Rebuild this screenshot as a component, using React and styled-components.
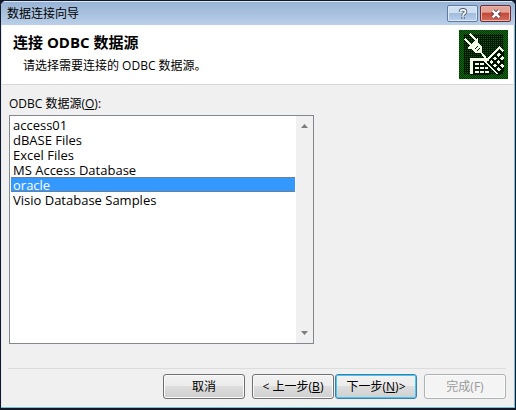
import React, { useState } from 'react';
import styled, { createGlobalStyle, css } from 'styled-components';

const SOURCES = [
  'access01',
  'dBASE Files',
  'Excel Files',
  'MS Access Database',
  'oracle',
  'Visio Database Samples',
];

function App() {
  const [source, setSource] = useState('oracle');

  return (
    <Dialog>
      <GlobalStyle />
      <TitleBar>
        <Caption>数据连接向导</Caption>
        <HelpButton aria-label="帮助">
          <HelpGlyph />
        </HelpButton>
        <CloseButton aria-label="关闭">
          <CloseGlyph />
        </CloseButton>
      </TitleBar>
      <Banner>
        <div>
          <Heading>连接 ODBC 数据源</Heading>
          <Hint>请选择需要连接的 ODBC 数据源。</Hint>
        </div>
        <PlugIcon />
      </Banner>
      <Content>
        <Label htmlFor="source">
          ODBC 数据源(<u>O</u>):
        </Label>
        <ListFrame>
          <List
            id="source"
            size={15}
            value={source}
            onChange={event => setSource(event.target.value)}
          >
            {SOURCES.map(name => (
              <Item key={name} value={name}>{name}</Item>
            ))}
          </List>
          <ScrollTrack>
            <Arrow />
            <Arrow $down />
          </ScrollTrack>
        </ListFrame>
      </Content>
      <Footer>
        <Button>取消</Button>
        <StepButtons>
          <Button>&lt; 上一步(<u>B</u>)</Button>
          <Button $primary>下一步(<u>N</u>)&gt;</Button>
        </StepButtons>
        <Button disabled>完成(F)</Button>
      </Footer>
    </Dialog>
  );
}

const HelpGlyph = () => (
  <svg width="12" height="12" viewBox="0 0 14 14" fill="none">
    <path d="M4 4.5C4 1.2 10 1.2 10 4.5C10 6.5 7 6.5 7 9M7 10.5V12.5" stroke="#46556f" strokeWidth="4" />
    <path d="M4 4.5C4 1.5 10 1.5 10 4.5C10 6.5 7 6.5 7 9M7 10.8V12.2" stroke="#fff" strokeWidth="2" />
  </svg>
);

const CloseGlyph = () => (
  <svg width="12" height="10" viewBox="0 0 14 12" fill="none">
    <path d="M3 2L11 10M11 2L3 10" stroke="#5d3540" strokeWidth="5" />
    <path d="M3 2L11 10M11 2L3 10" stroke="#fff" strokeWidth="3" />
  </svg>
);

const Arrow = ({ $down }) => (
  <svg width="7" height="4" viewBox="0 0 7 4">
    <path d={$down ? 'M0 0H7L3.5 4Z' : 'M0 4H7L3.5 0Z'} fill="#7c7c7c" />
  </svg>
);

const PlugIcon = () => (
  <svg width="49" height="49" viewBox="0 0 49 49" shapeRendering="crispEdges">
    <defs>
      <pattern id="rim" width="2" height="2" patternUnits="userSpaceOnUse">
        <rect width="2" height="2" fill="#002c00" />
        <path d="M0 0H1V1H0ZM1 1H2V2H1Z" fill="#087008" />
      </pattern>
      <pattern id="dots" width="2" height="2" patternUnits="userSpaceOnUse">
        <rect width="2" height="2" fill="#001800" />
        <path d="M0 0H1V1H0Z" fill="#0c5a10" />
      </pattern>
      <clipPath id="plate">
        <path d="M0 0H45V45H0Z" />
      </clipPath>
    </defs>
    <rect width="49" height="49" fill="url(#rim)" />
    <rect x="5" y="4" width="39" height="40" fill="url(#dots)" />
    <path d="M11 28H31V45H11Z" fill="#001400" />
    <path d="M11 28H27V31H14V44H11Z" fill="#f4fbe8" />
    <path d="M16 33h4v2h-4zM21 33h4v2h-4zM16 37h4v2h-4zM21 37h4v2h-4zM26 37h3v2h-3zM16 41h4v2h-4zM21 41h4v2h-4zM26 41h4v2h-4z" fill="#f4fbe8" />
    <g clipPath="url(#plate)">
      <g transform="translate(25 32) rotate(-45)">
        <path d="M0 0H23V20H0Z" fill="#001400" />
        <path d="M0 0H22V6H20V2H2V18H0Z" fill="#f4fbe8" />
        <path
          d="M4 4h3v3h-3zM9 4h3v3h-3zM14 4h3v3h-3zM4 9h3v3h-3zM9 9h3v3h-3zM14 9h3v3h-3zM4 14h3v3h-3zM9 14h3v3h-3zM14 14h3v3h-3zM19 9h3v3h-3z"
          fill="#f4fbe8"
        />
      </g>
    </g>
    <path d="M6 9L12 15M11 4L17 10M21 21L29 31" stroke="#f4fbe8" strokeWidth="2" fill="none" />
    <path d="M8 18L18 8L19 9L19 12L23 17V23H17L12 19L9 19Z" fill="#f4fbe8" />
    <path d="M16 19L19 16M18 21L21 18" stroke="#001400" fill="none" />
  </svg>
);

const GlobalStyle = createGlobalStyle`
  * {
    box-sizing: border-box;
  }

  body {
    margin: 0;
    background: #10182a;
    color: #000;
    font: 12px/16px "Open Sans", "Noto Sans CJK SC", sans-serif;
  }

  button,
  select {
    font: inherit;
    color: inherit;
  }

  svg {
    display: block;
    flex: none;
  }
`;

const Dialog = styled.main`
  display: flex;
  flex-direction: column;
  min-height: 100vh;
  border: 1px solid #10182a;
  border-bottom-width: 2px;
  border-radius: 6px 6px 0 0;
  background: #f0f0f0;
  box-shadow: inset -1px -1px #6fc3d6, inset 1px 0 #e4e8f4;
  overflow: hidden;
`;

const TitleBar = styled.header`
  display: flex;
  align-items: center;
  gap: 2px;
  height: 24px;
  padding: 0 4px 0 6px;
  border-top: 1px solid #dbe8f5;
  background: linear-gradient(#98b4d4, #b9cfe9);
`;

const Caption = styled.span`
  flex: 1;
`;

const captionButton = css`
  display: flex;
  align-items: center;
  justify-content: center;
  width: 31px;
  height: 17px;
  padding: 0;
  border-radius: 2px;
`;

const HelpButton = styled.button`
  ${captionButton}
  border: 1px solid #5f7ba3;
  background: linear-gradient(#cfdff2 45%, #a3bddd 50%, #b9d0eb);
  box-shadow: inset 0 0 0 1px #dbe9f8;
`;

const CloseButton = styled.button`
  ${captionButton}
  border: 1px solid #6d2a30;
  background: linear-gradient(#e3a296 40%, #c4493b 50%, #d0705c);
  box-shadow: inset 0 0 0 1px #e9b5aa;
`;

const Banner = styled.section`
  display: flex;
  justify-content: space-between;
  margin: 0 2px 0 1px;
  padding: 5px 5px 5px 11px;
  border-bottom: 1px solid #d5d5d5;
  background: #fff;
`;

const Heading = styled.h1`
  margin: 2px 0 6px;
  font-size: 15px;
  line-height: 20px;
`;

const Hint = styled.p`
  margin: 2px 0 0;
  padding-left: 10px;
`;

const Content = styled.section`
  display: grid;
  grid-template-columns: 8fr 5fr;
  align-content: start;
  flex: 1;
  padding: 11px 10px 0 8px;
`;

const Label = styled.label`
  grid-column: 1 / -1;
  margin-bottom: 3px;
`;

const ListFrame = styled.div`
  display: flex;
  border: 1px solid #828790;
  background: #fff;
`;

const List = styled.select`
  flex: 1;
  min-width: 0;
  height: 227px;
  padding: 1px;
  border: 0;
  outline: 0;
  background: #fff;
  font-size: 13px;
  overflow: hidden;
`;

const Item = styled.option`
  display: flex;
  align-items: center;
  height: 15px;
  min-height: 15px;
  padding: 0 2px;

  &:checked {
    background: linear-gradient(#6b7f95 1px, #3399ff 1px, #3399ff 14px, #6b7f95 14px);
    color: #fff;
  }
`;

const ScrollTrack = styled.div`
  display: flex;
  flex-direction: column;
  align-items: center;
  justify-content: space-between;
  width: 17px;
  padding: 8px 0;
  background: #f0f0f0;
`;

const Footer = styled.footer`
  display: flex;
  justify-content: flex-end;
  gap: 7px;
  margin: 0 9px 0 7px;
  padding: 5px 0 9px;
  border-top: 1px solid #dcdcdc;
`;

const StepButtons = styled.div`
  display: flex;
  gap: 1px;
`;

const Button = styled.button`
  width: 82px;
  height: 25px;
  padding: 0;
  border: 1px solid #707070;
  border-radius: 3px;
  background: linear-gradient(#f2f2f2, #ebebeb 50%, #dddddd 50%, #cfcfcf);
  box-shadow: inset 0 0 0 1px #fafafa;

  ${({ $primary }) => $primary && css`
    border-color: #3c7fb1;
    box-shadow: inset 0 0 0 1px #48c8f0;
  `}

  &:disabled {
    border-color: #adb2b5;
    background: #f4f4f4;
    color: #9a9a9a;
  }
`;

export default App;
